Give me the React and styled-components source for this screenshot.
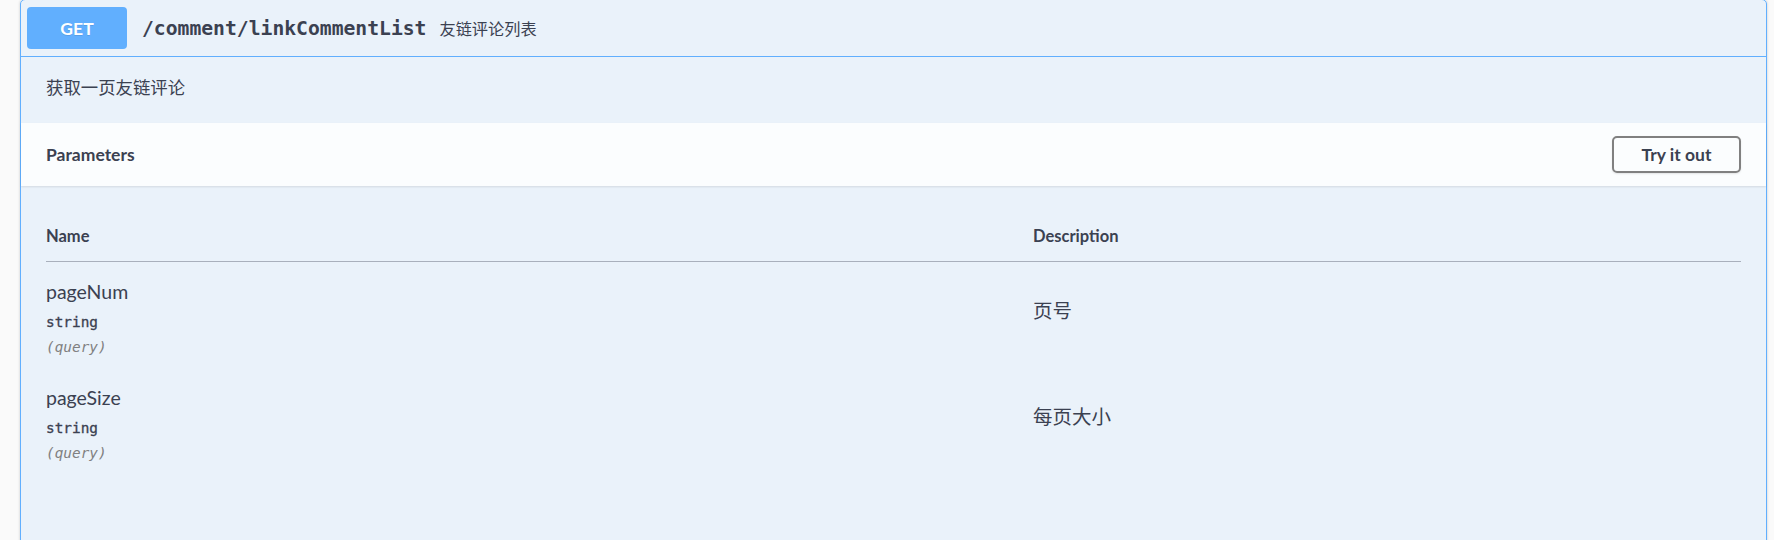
import React from "react";
import styled, { createGlobalStyle } from "styled-components";

const Global = createGlobalStyle`
  html, body { margin: 0; padding: 0; background: #fafafa; }
  body { font-family: Lato, "Noto Sans CJK SC", sans-serif; color: #3b4151; }
`;

const Page = styled.div`
  padding: 0 7px 0 20px;
`;

const OpBlock = styled.div`
  margin-top: -1px;
  border: 1px solid #61affe;
  border-radius: 5px;
  background: rgba(97, 175, 254, 0.1);
  box-shadow: 0 0 3px rgba(0, 0, 0, 0.19);
`;

const Summary = styled.div`
  display: flex;
  align-items: center;
  padding: 7px 6px 7px 6px;
  border-bottom: 1px solid #61affe;
`;

const Method = styled.span`
  display: flex;
  align-items: center;
  justify-content: center;
  width: 100px;
  height: 42px;
  border-radius: 4px;
  background: #61affe;
  color: #fff;
  font-family: Lato, sans-serif;
  font-size: 17.5px;
  font-weight: 700;
  text-shadow: 0 1px 0 rgba(0, 0, 0, 0.1);
`;

const Path = styled.span`
  padding: 0 13px 0 15px;
  font-family: "DejaVu Sans Mono", monospace;
  font-weight: 700;
  font-size: 19.7px;
  color: #3b4151;
`;

const SummaryDesc = styled.span`
  font-family: "Noto Sans CJK SC", sans-serif;
  font-size: 16.2px;
  color: #3b4151;
`;

const Description = styled.div`
  padding: 19px 25px 25px;
  font-family: "Noto Sans CJK SC", sans-serif;
  font-size: 17.4px;
  line-height: 22px;
`;

const SectionHeader = styled.div`
  display: flex;
  align-items: center;
  justify-content: space-between;
  min-height: 63px;
  padding: 0 25px;
  background: rgba(255, 255, 255, 0.8);
  box-shadow: 0 1px 2px rgba(0, 0, 0, 0.1);
`;

const SectionTitle = styled.h4`
  margin: 0;
  font-family: Lato, sans-serif;
  font-size: 17.5px;
  font-weight: 700;
  color: #3b4151;
`;

const TryButton = styled.button`
  width: 129px;
  height: 37px;
  border: 2px solid #808080;
  border-radius: 5px;
  background: transparent;
  box-shadow: 0 1px 2px rgba(0, 0, 0, 0.1);
  font-family: Lato, sans-serif;
  font-size: 17.5px;
  font-weight: 700;
  color: #3b4151;
  cursor: pointer;
`;

const TableContainer = styled.div`
  padding: 25px 25px 90px;
`;

const Table = styled.div`
  display: grid;
  grid-template-columns: 987px 1fr;
`;

const HeadCell = styled.div`
  padding: 15px 0;
  line-height: 20px;
  font-family: Lato, sans-serif;
  font-size: 16.5px;
  font-weight: 700;
  color: #3b4151;
  border-bottom: 1px solid #a9b0bc;
`;

const NameCell = styled.div`
  display: flex;
  flex-direction: column;
  padding: 15px 0 12px;
`;

const ParamName = styled.div`
  font-family: Lato, sans-serif;
  font-size: 19.5px;
  line-height: 30px;
  color: #3b4151;
`;

const ParamType = styled.div`
  padding: 6px 0 7px;
  font-family: "DejaVu Sans Mono", monospace;
  font-size: 14.4px;
  font-weight: 400;
  line-height: 18px;
  color: #3b4151;
  -webkit-text-stroke: 0.3px #3b4151;
`;

const ParamIn = styled.div`
  font-family: "DejaVu Sans Mono", monospace;
  font-size: 14.4px;
  font-style: italic;
  line-height: 18px;
  color: #808080;
`;

const DescCell = styled.div`
  padding-top: 36px;
  font-family: "Noto Sans CJK SC", sans-serif;
  font-size: 19.5px;
  line-height: 24px;
  color: #3b4151;
`;

const params = [
  { name: "pageNum", type: "string", in: "(query)", desc: "页号" },
  { name: "pageSize", type: "string", in: "(query)", desc: "每页大小" },
];

export default function App() {
  return (
    <>
      <Global />
      <Page>
        <OpBlock>
          <Summary>
            <Method>GET</Method>
            <Path>/comment/linkCommentList</Path>
            <SummaryDesc>友链评论列表</SummaryDesc>
          </Summary>
          <Description>获取一页友链评论</Description>
          <SectionHeader>
            <SectionTitle>Parameters</SectionTitle>
            <TryButton>Try it out</TryButton>
          </SectionHeader>
          <TableContainer>
            <Table>
              <HeadCell>Name</HeadCell>
              <HeadCell>Description</HeadCell>
              {params.map((p) => (
                <React.Fragment key={p.name}>
                  <NameCell>
                    <ParamName>{p.name}</ParamName>
                    <ParamType>{p.type}</ParamType>
                    <ParamIn>{p.in}</ParamIn>
                  </NameCell>
                  <DescCell>{p.desc}</DescCell>
                </React.Fragment>
              ))}
            </Table>
          </TableContainer>
        </OpBlock>
      </Page>
    </>
  );
}
